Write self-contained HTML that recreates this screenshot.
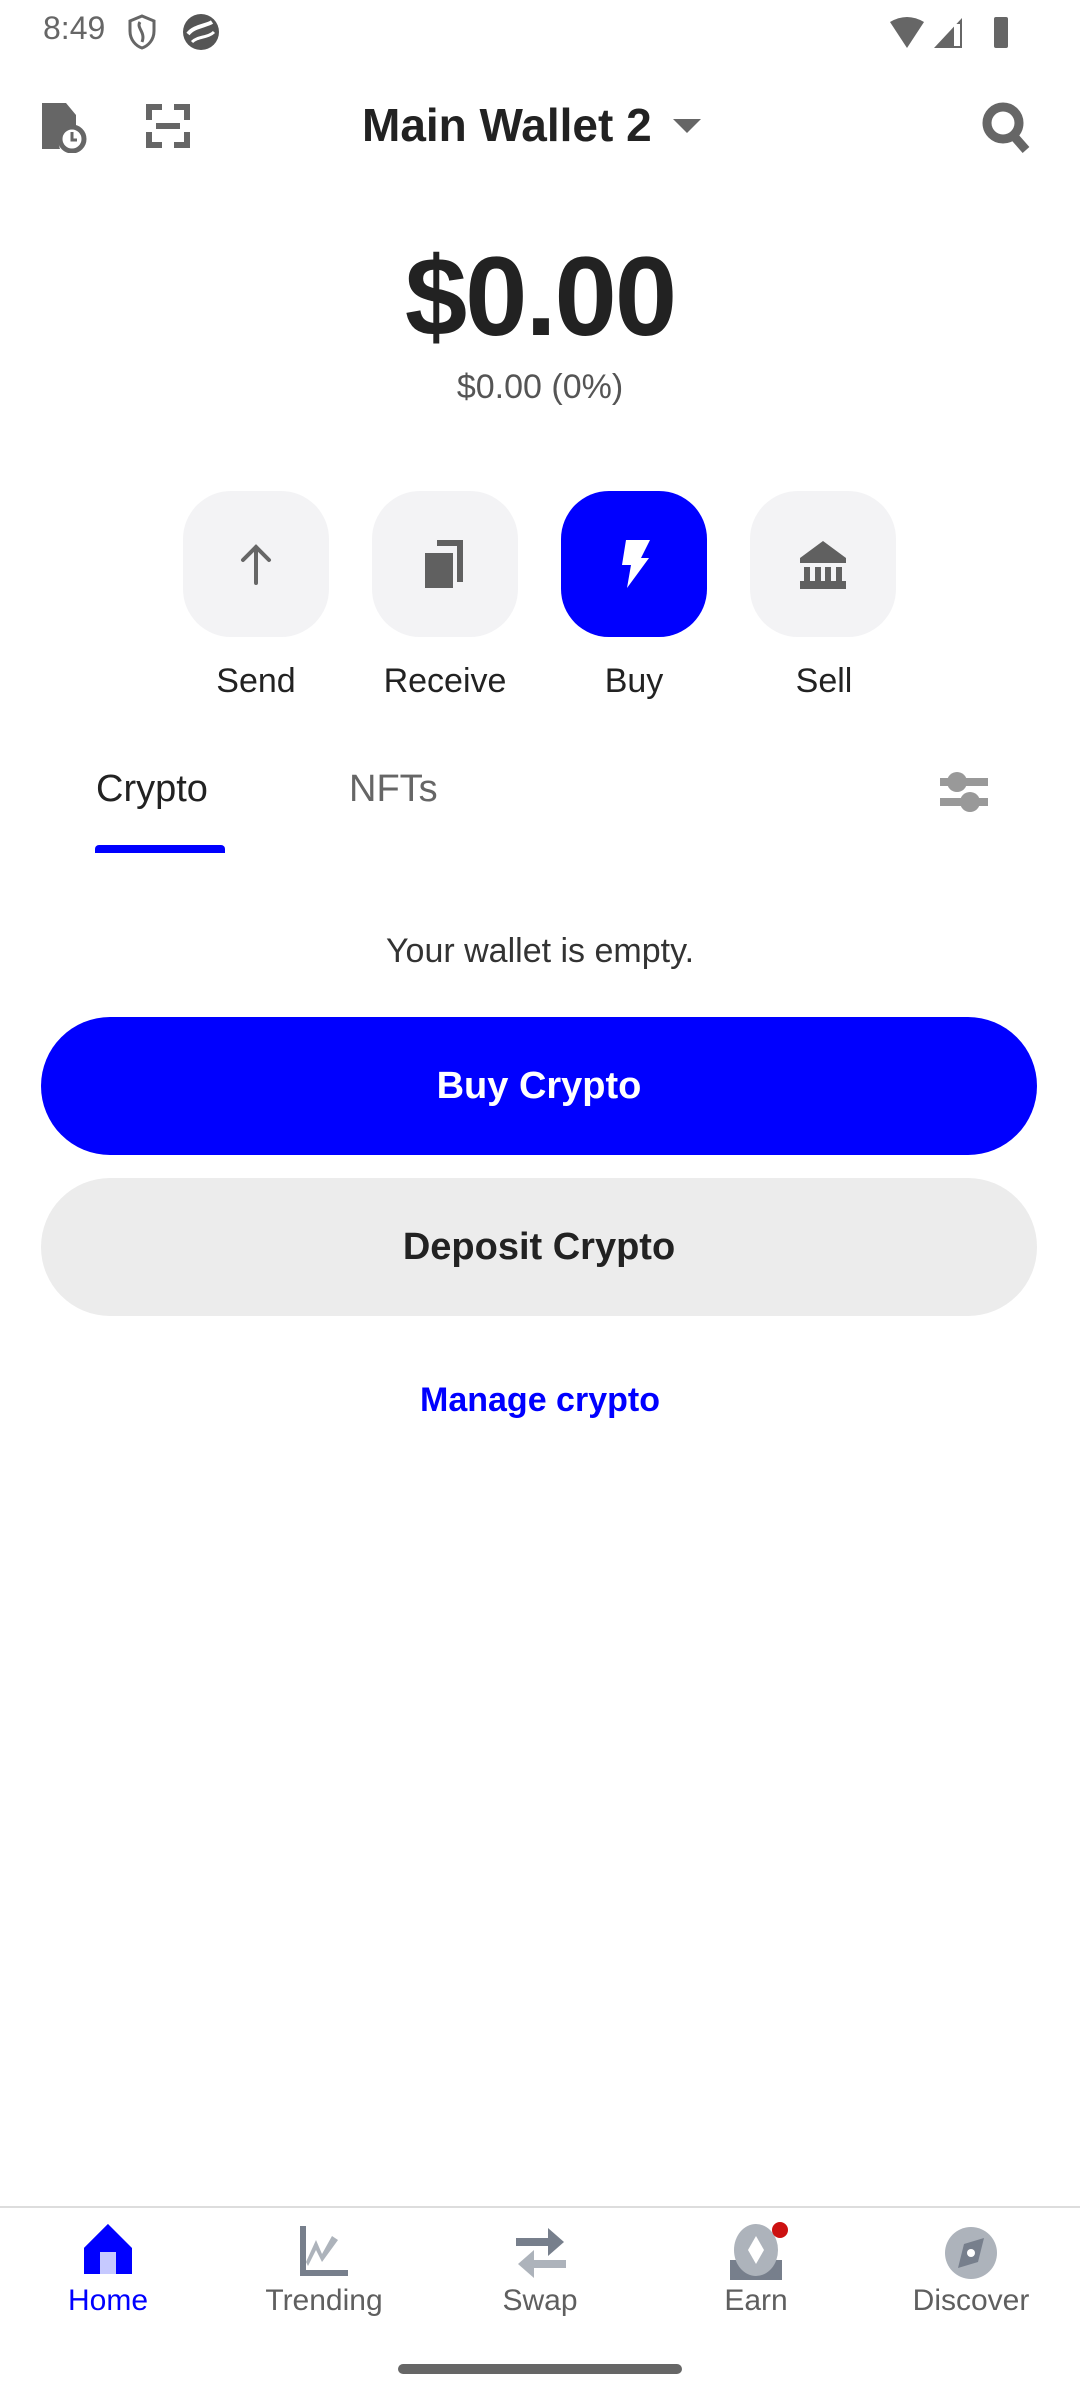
<!DOCTYPE html>
<html><head><meta charset="utf-8"><style>
*{margin:0;padding:0;box-sizing:border-box}
body{width:1080px;height:2400px;background:#fff;font-family:"Liberation Sans",sans-serif;position:relative;overflow:hidden;color:#222}
.a{position:absolute}
.c{position:absolute;transform:translateX(-50%);white-space:nowrap}
.btn{position:absolute;width:146px;height:146px;border-radius:48px;background:#f3f3f5;top:491px}
.lbl{position:absolute;top:662px;font-size:34px;color:#222;transform:translateX(-50%)}
.nav{position:absolute;top:2284px;font-size:30px;color:#5f5f5f;transform:translateX(-50%)}
</style></head><body>
<div class="a" style="left:43px;top:10px;font-size:32px;color:#666">8:49</div>
<svg class="a" style="left:128px;top:14px" width="28" height="36" viewBox="0 0 28 36"><path d="M14 2 L26 7 V17 C26 26 20 32 14 34 C8 32 2 26 2 17 V7Z" fill="none" stroke="#666" stroke-width="3"/><path d="M12 8 C8 14 18 18 14 28" stroke="#666" stroke-width="3" fill="none"/></svg>
<svg class="a" style="left:180px;top:12px" width="42" height="40" viewBox="0 0 42 40"><circle cx="21" cy="20" r="18" fill="#555"/><path d="M8 22 C14 14 26 14 32 10" stroke="#fff" stroke-width="4" fill="none"/><path d="M12 30 C18 24 28 26 34 20" stroke="#fff" stroke-width="3" fill="none"/></svg>
<svg class="a" style="left:888px;top:14px" width="130" height="36" viewBox="0 0 130 36"><path d="M2 8 Q19 -2 36 8 L19 34Z" fill="#666"/><path d="M46 34 L74 4 V34Z" fill="#666"/><rect x="66" y="10" width="6" height="22" fill="#fff"/><rect x="106" y="3" width="14" height="31" rx="2" fill="#666"/></svg>
<!-- header -->
<svg class="a" style="left:42px;top:103px" width="46" height="50" viewBox="0 0 46 50"><path d="M0 0 H24 L34 12 V24 A16 16 0 0 0 18 46 H0Z" fill="#666"/><circle cx="30" cy="36" r="12" fill="none" stroke="#666" stroke-width="5"/><path d="M30 29 V37 H35" stroke="#666" stroke-width="3" fill="none"/></svg>
<svg class="a" style="left:146px;top:104px" width="44" height="44" viewBox="0 0 44 44" fill="#666"><path d="M0 0H16V6H6V16H0Z"/><path d="M44 0H28V6H38V16H44Z"/><path d="M0 44H16V38H6V28H0Z"/><path d="M44 44H28V38H38V28H44Z"/><rect x="10" y="19" width="24" height="6"/></svg>
<div class="a" style="left:362px;top:98px;font-size:46px;font-weight:bold;color:#222">Main Wallet 2</div>
<svg class="a" style="left:673px;top:119px" width="28" height="16"><path d="M0 0H28L14 14Z" fill="#666"/></svg>
<svg class="a" style="left:982px;top:102px" width="50" height="52" viewBox="0 0 50 52"><circle cx="21" cy="21" r="16" fill="none" stroke="#666" stroke-width="9"/><path d="M30 32 L44 48" stroke="#666" stroke-width="9"/></svg>
<!-- balance -->
<div class="c" style="left:540px;top:232px;font-size:112px;font-weight:bold;color:#222;letter-spacing:-2px">$0.00</div>
<div class="c" style="left:540px;top:368px;font-size:34px;color:#555">$0.00 (0%)</div>
<!-- actions -->
<div class="btn" style="left:183px"><svg class="a" style="left:50px;top:50px" width="46" height="46" viewBox="0 0 46 46"><path d="M23 42V6 M10 19 L23 6 L36 19" stroke="#666" stroke-width="4" fill="none" stroke-linecap="round"/></svg></div>
<div class="btn" style="left:372px"><svg class="a" style="left:49px;top:49px" width="48" height="50" viewBox="0 0 48 50" fill="#606060"><path d="M16 0H42V42H36V6H16Z"/><rect x="4" y="13" width="28" height="35"/></svg></div>
<div class="btn" style="left:561px;background:#0000ff"><svg class="a" style="left:51px;top:49px" width="44" height="50" viewBox="0 0 44 50"><path d="M14 0H38L29 18H37L15 48L19 25H10Z" fill="#fff"/></svg></div>
<div class="btn" style="left:750px"><svg class="a" style="left:50px;top:50px" width="46" height="50" viewBox="0 0 46 50" fill="#606060"><path d="M23 0L46 17V22H0V17Z"/><rect x="4" y="26" width="6" height="14"/><rect x="15" y="26" width="6" height="14"/><rect x="25" y="26" width="6" height="14"/><rect x="36" y="26" width="6" height="14"/><rect x="0" y="40" width="46" height="8"/></svg></div>
<div class="lbl" style="left:256px">Send</div>
<div class="lbl" style="left:445px">Receive</div>
<div class="lbl" style="left:634px">Buy</div>
<div class="lbl" style="left:824px">Sell</div>
<!-- tabs -->
<div class="a" style="left:96px;top:768px;font-size:38px;color:#222">Crypto</div>
<div class="a" style="left:349px;top:768px;font-size:38px;color:#666">NFTs</div>
<div class="a" style="left:95px;top:845px;width:130px;height:8px;background:#0000ff;border-radius:4px 4px 0 0"></div>
<svg class="a" style="left:940px;top:768px" width="50" height="46" viewBox="0 0 50 46" fill="#999"><rect x="0" y="10" width="48" height="8"/><circle cx="17" cy="14" r="10"/><rect x="0" y="30" width="48" height="8"/><circle cx="30" cy="34" r="10"/></svg>
<!-- empty -->
<div class="c" style="left:540px;top:932px;font-size:34px;color:#333">Your wallet is empty.</div>
<div class="a" style="left:41px;top:1017px;width:996px;height:138px;border-radius:69px;background:#0000ff;color:#fff;font-size:38px;font-weight:bold;text-align:center;line-height:138px">Buy Crypto</div>
<div class="a" style="left:41px;top:1178px;width:996px;height:138px;border-radius:69px;background:#ececec;color:#222;font-size:38px;font-weight:bold;text-align:center;line-height:138px">Deposit Crypto</div>
<div class="c" style="left:540px;top:1381px;font-size:34px;color:#0000ff;font-weight:bold">Manage crypto</div>
<!-- nav -->
<div class="a" style="left:0;top:2206px;width:1080px;height:2px;background:#ddd"></div>
<svg class="a" style="left:84px;top:2224px" width="48" height="52" viewBox="0 0 48 52"><path d="M24 0L48 50H0V24Z" fill="#0000ff"/><path d="M24 0 L48 24 V50 H0 V24 Z" fill="#0000ff"/><rect x="16" y="28" width="16" height="22" fill="#c6c9ff"/></svg>
<svg class="a" style="left:300px;top:2226px" width="50" height="50" viewBox="0 0 50 50"><path d="M0 0H6V44H48V50H0Z" fill="#777f8c"/><path d="M6 36 L16 14 L22 28 L32 10 L38 14 L22 36 L16 24 L8 40Z" fill="#adb3bb"/></svg>
<svg class="a" style="left:516px;top:2224px" width="50" height="54" viewBox="0 0 50 54"><path d="M0 14H32V4L48 18L32 32V22H0Z" fill="#777f8c"/><path d="M50 36H18V26L2 40L18 54V44H50Z" fill="#adb3bb"/></svg>
<svg class="a" style="left:730px;top:2222px" width="62" height="58" viewBox="0 0 62 58"><rect x="0" y="38" width="52" height="20" fill="#777f8c"/><ellipse cx="26" cy="28" rx="22" ry="26" fill="#adb3bb"/><path d="M26 14L34 28L26 42L18 28Z" fill="#fff"/><circle cx="50" cy="8" r="8" fill="#cc1111"/></svg>
<svg class="a" style="left:944px;top:2226px" width="54" height="54" viewBox="0 0 54 54"><circle cx="27" cy="27" r="26" fill="#adb3bb"/><path d="M40 12L34 36L14 42L20 18Z" fill="#777f8c"/><circle cx="27" cy="27" r="4" fill="#fff"/></svg>
<div class="nav" style="left:108px;color:#0000ff">Home</div>
<div class="nav" style="left:324px">Trending</div>
<div class="nav" style="left:540px">Swap</div>
<div class="nav" style="left:756px">Earn</div>
<div class="nav" style="left:971px">Discover</div>
<div class="a" style="left:398px;top:2364px;width:284px;height:10px;border-radius:5px;background:#666"></div>
</body></html>
